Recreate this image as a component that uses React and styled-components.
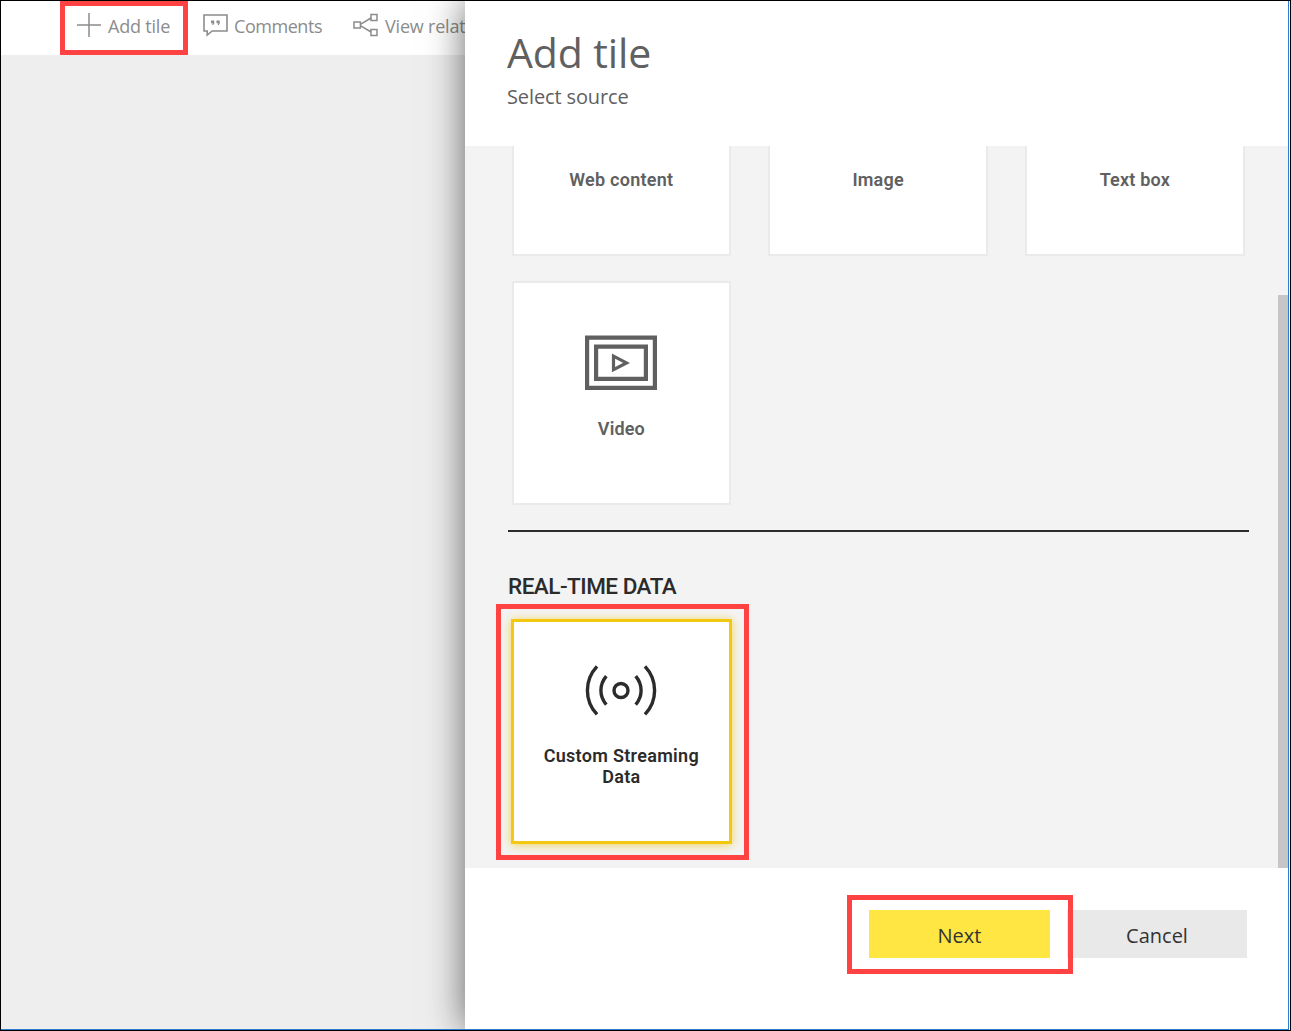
import React from "react";
import styled, { createGlobalStyle } from "styled-components";

const GlobalStyle = createGlobalStyle`
  *, *::before, *::after { box-sizing: border-box; }
  body { margin: 0; overflow: hidden; }
  svg { flex: none; }
`;

const ui = `"Segoe UI", "Open Sans", "Noto Sans", sans-serif`;
const din = `"DIN", Roboto, "Liberation Sans", sans-serif`;

const Screen = styled.div`
  position: relative;
  width: 1291px;
  height: 1031px;
  display: flex;
  background: #fff;
  border: 1px solid #000;
  padding-right: 1px;
  overflow: hidden;
  font-family: ${ui};
`;

const Window = styled.div`
  flex: 1;
  display: flex;
  border-right: 1px solid #2b7cd3;
  border-bottom: 1px solid #2b7cd3;
  overflow: hidden;
`;

const Dashboard = styled.main`
  width: 464px;
  display: flex;
  flex-direction: column;
  background: #eeeeee;
  overflow: hidden;
`;

const Toolbar = styled.nav`
  height: 54px;
  flex: none;
  display: flex;
  align-items: center;
  gap: 32px;
  padding: 0 0 6px 75px;
  background: #fff;
`;

const ToolbarItem = styled.button`
  width: ${(p) => p.$width}px;
  flex: none;
  display: flex;
  align-items: center;
  gap: ${(p) => p.$gap}px;
  padding: 0;
  border: 0;
  background: none;
  color: #8c8c8c;
  font: 400 18px/24px ${ui};
  letter-spacing: ${(p) => p.$spacing}px;
  white-space: nowrap;
`;

const ToolbarText = styled.span`
  padding-top: 1px;
`;

const Panel = styled.aside`
  position: relative;
  flex: 1;
  display: flex;
  flex-direction: column;
  background: #fff;
  box-shadow: 0 0 36px rgba(0, 0, 0, 0.59);
`;

const PanelHeader = styled.header`
  height: 145px;
  flex: none;
  padding: 23px 42px 0;
  color: #606060;
`;

const Title = styled.h1`
  margin: 0;
  font: 400 41px/56px ${ui};
  letter-spacing: -0.1px;
`;

const Subtitle = styled.p`
  margin: 3px 0 0;
  font: 400 20px/28px ${ui};
  letter-spacing: -0.12px;
`;

const PanelBody = styled.section`
  height: 722px;
  flex: none;
  display: flex;
  justify-content: space-between;
  background: #f3f3f3;
  overflow: hidden;
`;

const Sources = styled.div`
  width: 741px;
  margin: -114px 0 0 43px;
  display: flex;
  flex-direction: column;
`;

const Tiles = styled.div`
  display: grid;
  grid-template-columns: repeat(3, 219.6px);
  grid-auto-rows: 224px;
  gap: 25px 37.2px;
  padding-left: 3.5px;
`;

const Tile = styled.div`
  display: flex;
  flex-direction: column;
  align-items: center;
  padding-top: ${(p) => (p.$selected ? 41 : 52)}px;
  margin: ${(p) => (p.$selected ? "0 -0.5px -1px" : "0")};
  background: #fff;
  border: ${(p) => (p.$selected ? "3px solid #f2c811" : "2px solid #eaeaea")};
  box-shadow: ${(p) => (p.$selected ? "0 1px 9px rgba(242, 200, 17, 0.7)" : "none")};
  color: ${(p) => (p.$selected ? "#2b2b2b" : "#606060")};
`;

const TileIcon = styled.div`
  height: 56px;
  flex: none;
  display: flex;
`;

const TileLabel = styled.div`
  width: 170px;
  margin-top: ${(p) => (p.$selected ? 26 : 27)}px;
  font: 600 18px/21px ${din};
  letter-spacing: ${(p) => p.$spacing}px;
  text-align: center;
`;

const Divider = styled.hr`
  width: 741px;
  height: 2px;
  margin: 25px 0 0;
  border: 0;
  background: #2b2b2b;
`;

const SectionTitle = styled.h2`
  margin: 40px 0 19px;
  color: #2b2b2b;
  font: 500 22.5px/28px ${din};
  letter-spacing: -0.5px;
`;

const ScrollTrack = styled.div`
  width: 10px;
  padding-top: 149px;
  display: flex;
`;

const ScrollThumb = styled.div`
  flex: 1;
  background: #c6c6c6;
`;

const PanelFooter = styled.footer`
  display: flex;
  justify-content: flex-end;
  gap: 17px;
  padding: 42px 41px 0 0;
`;

const Button = styled.button`
  width: ${(p) => (p.$primary ? 181 : 180)}px;
  height: 48px;
  padding: 3px 0 0;
  border: 0;
  background: ${(p) => (p.$primary ? "#ffe642" : "#e9e9e9")};
  color: #333;
  font: 400 20px/28px ${ui};
`;

const Highlight = styled.div`
  position: absolute;
  left: ${(p) => p.$x - 1}px;
  top: ${(p) => p.$y - 1}px;
  width: ${(p) => p.$w}px;
  height: ${(p) => p.$h}px;
  border: 5px solid #ff4343;
  pointer-events: none;
`;

const PlusIcon = () => (
  <svg width="26" height="26" viewBox="0 0 26 26" fill="none" stroke="#8c8c8c" strokeWidth="1.5">
    <path d="M13 1v24M1 13h24" />
  </svg>
);

const CommentIcon = () => (
  <svg width="25" height="24" viewBox="0 0 25 24" fill="none" stroke="#8c8c8c" strokeWidth="1.6">
    <path d="M1 2h23v16H9.2L4.2 22v-4H1z" />
    <path d="M8 7.5h3.2v3l-1 1.4h-1l.5-1.6H8zM13.5 7.5h3.2v3l-1 1.4h-1l.5-1.6h-1.7z" fill="#8c8c8c" stroke="none" />
  </svg>
);

const RelatedIcon = () => (
  <svg width="26" height="24" viewBox="0 0 26 24" fill="none" stroke="#8c8c8c" strokeWidth="1.5">
    <path d="M1 9h6.4v6H1zM18 1.5h6v6h-6zM18 16.5h6v6h-6zM7.4 11.4L18 5M7.4 12.6L18 19" />
  </svg>
);

const VideoIcon = () => (
  <svg width="72" height="55" viewBox="0 0 72 55" fill="none" stroke="#606060" strokeWidth="4.2">
    <path d="M2.1 2.6h67.8v50.3H2.1z" />
    <path d="M11.1 11.6h49.8v32.3H11.1z" />
    <path d="M28.5 21.2v13.4l13-6.7z" strokeWidth="3.2" />
  </svg>
);

const StreamIcon = () => (
  <svg width="74" height="56" viewBox="0 0 74 56" fill="none" stroke="#2b2b2b" strokeWidth="3.4">
    <circle cx="37" cy="27.5" r="7" />
    <path d="M13 3.4C.2 17.2.2 37.6 13 51.4M61 3.4c12.8 13.8 12.8 34.2 0 48M22.3 13.2c-7.2 8.7-7.2 19.7 0 28.4M51.7 13.2c7.2 8.7 7.2 19.7 0 28.4" />
  </svg>
);

const mediaSources = [
  { label: "Web content", spacing: 0.25 },
  { label: "Image", spacing: 0.2 },
  { label: "Text box", spacing: 0.2 },
  { label: "Video", spacing: 0.1, icon: <VideoIcon /> },
];

export default function App() {
  return (
    <>
      <GlobalStyle />
      <Screen>
        <Window>
          <Dashboard>
            <Toolbar>
              <ToolbarItem $width={95} $gap={6} $spacing={-0.2}>
                <PlusIcon /><ToolbarText>Add tile</ToolbarText>
              </ToolbarItem>
              <ToolbarItem $width={118} $gap={6} $spacing={-0.45}>
                <CommentIcon /><ToolbarText>Comments</ToolbarText>
              </ToolbarItem>
              <ToolbarItem $width={130} $gap={6} $spacing={-0.2}>
                <RelatedIcon /><ToolbarText>View related</ToolbarText>
              </ToolbarItem>
            </Toolbar>
          </Dashboard>
          <Panel>
            <PanelHeader>
              <Title>Add tile</Title>
              <Subtitle>Select source</Subtitle>
            </PanelHeader>
            <PanelBody>
              <Sources>
                <Tiles>
                  {mediaSources.map((s) => (
                    <Tile key={s.label}>
                      <TileIcon>{s.icon}</TileIcon>
                      <TileLabel $spacing={s.spacing}>{s.label}</TileLabel>
                    </Tile>
                  ))}
                </Tiles>
                <Divider />
                <SectionTitle>REAL-TIME DATA</SectionTitle>
                <Tiles>
                  <Tile $selected>
                    <TileIcon><StreamIcon /></TileIcon>
                    <TileLabel $selected $spacing={0.3}>Custom Streaming Data</TileLabel>
                  </Tile>
                </Tiles>
              </Sources>
              <ScrollTrack><ScrollThumb /></ScrollTrack>
            </PanelBody>
            <PanelFooter>
              <Button $primary>Next</Button>
              <Button>Cancel</Button>
            </PanelFooter>
          </Panel>
        </Window>
        <Highlight $x={60} $y={1} $w={128} $h={54} />
        <Highlight $x={496} $y={604} $w={253} $h={256} />
        <Highlight $x={847} $y={895} $w={226} $h={79} />
      </Screen>
    </>
  );
}
